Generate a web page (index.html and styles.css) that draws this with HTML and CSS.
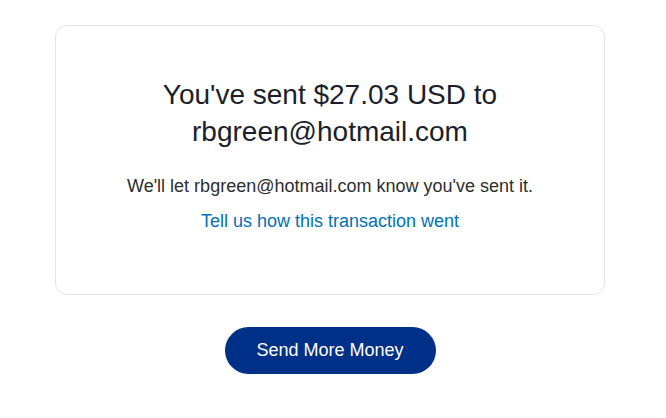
FILE: index.html
```html
<!DOCTYPE html>
<html>
<head>
    <title>Payment Sent</title>
    <link rel="stylesheet" href="styles.css">
</head>
<body>
    <div class="page">
        <div class="card">
            <h1 class="title">You've sent $27.03 USD to<br>rbgreen@hotmail.com</h1>
            <p class="note">We'll let rbgreen@hotmail.com know you've sent it.</p>
            <a class="feedback" href="#">Tell us how this transaction went</a>
        </div>
        <button class="send-more">Send More Money</button>
    </div>
</body>
</html>
```

FILE: styles.css
```css
body {
    margin: 0;
    background: #ffffff;
    font-family: "Liberation Sans", Arial, sans-serif;
    color: #2c2e2f;
}

.page {
    width: 660px;
    padding-top: 25px;
    display: flex;
    flex-direction: column;
    align-items: center;
}

.card {
    box-sizing: border-box;
    width: 550px;
    height: 270px;
    border: 1px solid #e3e4e6;
    border-radius: 12px;
    padding-top: 50px;
    display: flex;
    flex-direction: column;
    align-items: center;
    text-align: center;
}

.title {
    margin: 0;
    font-size: 28px;
    font-weight: normal;
    line-height: 37px;
    color: #1b1f2b;
}

.note {
    margin: 24px 0 0;
    font-size: 18px;
    line-height: 24px;
}

.feedback {
    margin-top: 11px;
    font-size: 18px;
    line-height: 24px;
    color: #0070ba;
    text-decoration: none;
}

.send-more {
    margin-top: 32px;
    width: 211px;
    height: 47px;
    border: none;
    border-radius: 24px;
    background: #003087;
    color: #ffffff;
    font-family: "Liberation Sans", Arial, sans-serif;
    font-size: 18px;
    cursor: pointer;
}
```
